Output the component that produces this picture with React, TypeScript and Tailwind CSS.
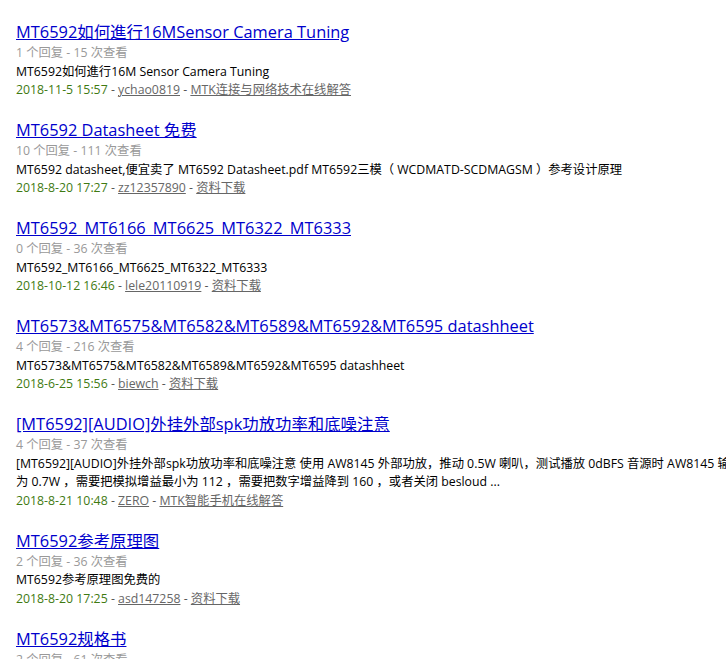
import React from "react";

type Item = {
  title: string;
  replies: number;
  views: number;
  summary: string[];
  date: string;
  author: string;
  forum: string;
};

const items: Item[] = [
  {
    title: "MT6592如何進行16MSensor Camera Tuning",
    replies: 1,
    views: 15,
    summary: ["MT6592如何進行16M Sensor Camera Tuning"],
    date: "2018-11-5 15:57",
    author: "ychao0819",
    forum: "MTK连接与网络技术在线解答",
  },
  {
    title: "MT6592 Datasheet 免费",
    replies: 10,
    views: 111,
    summary: [
      "MT6592 datasheet,便宜卖了 MT6592 Datasheet.pdf MT6592三模（ WCDMATD-SCDMAGSM ）参考设计原理",
    ],
    date: "2018-8-20 17:27",
    author: "zz12357890",
    forum: "资料下载",
  },
  {
    title: "MT6592_MT6166_MT6625_MT6322_MT6333",
    replies: 0,
    views: 36,
    summary: ["MT6592_MT6166_MT6625_MT6322_MT6333"],
    date: "2018-10-12 16:46",
    author: "lele20110919",
    forum: "资料下载",
  },
  {
    title: "MT6573&MT6575&MT6582&MT6589&MT6592&MT6595 datashheet",
    replies: 4,
    views: 216,
    summary: ["MT6573&MT6575&MT6582&MT6589&MT6592&MT6595 datashheet"],
    date: "2018-6-25 15:56",
    author: "biewch",
    forum: "资料下载",
  },
  {
    title: "[MT6592][AUDIO]外挂外部spk功放功率和底噪注意",
    replies: 4,
    views: 37,
    summary: [
      "[MT6592][AUDIO]外挂外部spk功放功率和底噪注意 使用 AW8145 外部功放，推动 0.5W 喇叭，测试播放 0dBFS 音源时 AW8145 输出功率",
      "为 0.7W ，需要把模拟增益最小为 112 ，需要把数字增益降到 160 ，或者关闭 besloud ...",
    ],
    date: "2018-8-21 10:48",
    author: "ZERO",
    forum: "MTK智能手机在线解答",
  },
  {
    title: "MT6592参考原理图",
    replies: 2,
    views: 36,
    summary: ["MT6592参考原理图免费的"],
    date: "2018-8-20 17:25",
    author: "asd147258",
    forum: "资料下载",
  },
  {
    title: "MT6592规格书",
    replies: 2,
    views: 61,
    summary: ["MT6592规格书"],
    date: "2018-8-20 17:25",
    author: "asd147258",
    forum: "资料下载",
  },
];

const font = {
  fontFamily: '"Open Sans", "Noto Sans CJK SC", sans-serif',
};

export default function App() {
  return (
    <div
      className="w-[726px] h-[659px] overflow-hidden bg-white"
      style={font}
    >
      <ul className="pl-4 pt-[20px] flex flex-col gap-[18.5px]">
        {items.map((it, i) => (
          <li key={i} className="whitespace-nowrap">
            <h3 className="text-[16.4px] leading-[24px] font-normal">
              <a href="#" className="text-[#0000cc] underline">
                {it.title}
              </a>
            </h3>
            <p className="text-[12.3px] leading-[18.5px] text-[#999]">
              {it.replies} 个回复 - {it.views} 次查看
            </p>
            {it.summary.map((s, j) => (
              <p key={j} className="text-[12.3px] leading-[18.5px] text-black">
                {s}
              </p>
            ))}
            <p className="text-[12.3px] leading-[18.5px] text-[#555]">
              <span className="text-[#3f7a12]">{it.date}</span> -{" "}
              <a href="#" className="underline text-[#666]">
                {it.author}
              </a>{" "}
              -{" "}
              <a href="#" className="underline text-[#666]">
                {it.forum}
              </a>
            </p>
          </li>
        ))}
      </ul>
    </div>
  );
}
